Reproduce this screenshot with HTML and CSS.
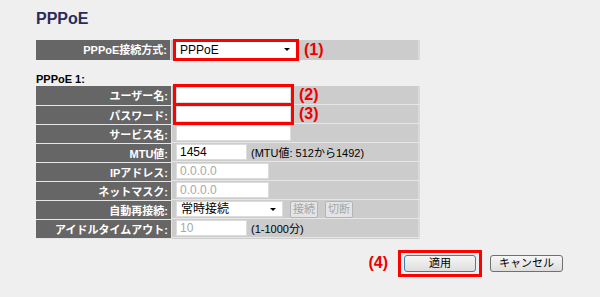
FILE: index.html
```html
<!DOCTYPE html>
<html lang="ja">
<head>
    <meta charset="UTF-8">
    <title>PPPoE</title>
    <link rel="stylesheet" href="styles.css">
</head>
<body>
    <h1 class="title">PPPoE</h1>

    <div class="setting-row">
        <div class="label">PPPoE接続方式:</div>
        <div class="value">
            <span class="select wide marked">PPPoE<i class="arrow"></i></span>
            <span class="note-mark">(1)</span>
        </div>
    </div>

    <div class="section-title">PPPoE 1:</div>

    <table class="settings">
        <tr>
            <td class="label">ユーザー名:</td>
            <td class="value"><span class="field long marked"></span><span class="note-mark">(2)</span></td>
        </tr>
        <tr>
            <td class="label">パスワード:</td>
            <td class="value"><span class="field long marked"></span><span class="note-mark">(3)</span></td>
        </tr>
        <tr>
            <td class="label">サービス名:</td>
            <td class="value"><span class="field long"></span></td>
        </tr>
        <tr>
            <td class="label">MTU値:</td>
            <td class="value"><span class="field short">1454</span><span class="hint">(MTU値: 512から1492)</span></td>
        </tr>
        <tr>
            <td class="label">IPアドレス:</td>
            <td class="value"><span class="field mid disabled">0.0.0.0</span></td>
        </tr>
        <tr>
            <td class="label">ネットマスク:</td>
            <td class="value"><span class="field mid disabled">0.0.0.0</span></td>
        </tr>
        <tr>
            <td class="label">自動再接続:</td>
            <td class="value">
                <span class="select auto">常時接続<i class="arrow"></i></span>
                <span class="btn-small">接続</span>
                <span class="btn-small">切断</span>
            </td>
        </tr>
        <tr>
            <td class="label">アイドルタイムアウト:</td>
            <td class="value"><span class="field short disabled">10</span><span class="hint">(1-1000分)</span></td>
        </tr>
    </table>

    <div class="actions">
        <span class="note-mark">(4)</span>
        <span class="btn-box"><button class="btn focused">適用</button></span>
        <button class="btn">キャンセル</button>
    </div>
</body>
</html>
```

FILE: styles.css
```css
body {
    margin: 0;
    background: #efefef;
    font-family: "Liberation Sans", "Noto Sans CJK JP", sans-serif;
    font-size: 12px;
    color: #000;
}

.title {
    margin: 0 0 12px 36px;
    padding-top: 10px;
    font-size: 16px;
    line-height: 18px;
    color: #2b2b5c;
}

.setting-row {
    display: flex;
    width: 384px;
    height: 20px;
    margin-left: 36px;
    background: #cccccc;
    box-shadow: inset -2px 0 0 #dadada;
}

.label {
    width: 131px;
    padding-right: 3px;
    background: #666666;
    color: #fff;
    font-weight: bold;
    font-size: 11px;
    text-align: right;
    border-right: 1px solid #e4e4e4;
    white-space: nowrap;
}

.setting-row .label {
    line-height: 20px;
}

.value {
    display: flex;
    align-items: center;
    padding-left: 4px;
    white-space: nowrap;
}

.section-title {
    margin: 12px 0 0 36px;
    font-weight: bold;
    font-size: 11px;
    line-height: 14px;
}

.settings {
    width: 384px;
    margin-left: 36px;
    border-collapse: collapse;
    background: #cccccc;
    box-shadow: inset -2px 0 0 #dadada;
}

.settings td {
    height: 18px;
    padding-top: 0;
    padding-bottom: 0;
    border-bottom: 1px solid #e6e6e6;
}

.settings td.value {
    display: flex;
    height: 18px;
}

.field {
    display: inline-block;
    box-sizing: border-box;
    height: 16px;
    padding: 0 3px;
    background: #fff;
    border: 1px solid #dcdcdc;
    line-height: 14px;
}

.field.long { width: 115px; }
.field.mid { width: 93px; }
.field.short { width: 71px; }

.field.disabled {
    color: #a8a8a8;
}

.marked {
    outline: 3px solid #ff0000;
}

.hint {
    margin-left: 4px;
    font-size: 11px;
}

.note-mark {
    margin-left: 8px;
    color: #ee0000;
    font-weight: bold;
    font-size: 16px;
}

.select {
    position: relative;
    display: inline-block;
    box-sizing: border-box;
    height: 16px;
    padding: 0 4px;
    background: #fff;
    line-height: 16px;
}

.select.wide {
    width: 120px;
    margin-left: 1px;
}

.select.auto {
    width: 107px;
    border: 1px solid #dcdcdc;
    line-height: 14px;
}

.arrow {
    position: absolute;
    right: 6px;
    top: 6px;
    border-left: 3px solid transparent;
    border-right: 3px solid transparent;
    border-top: 3px solid #000;
}

.btn-small {
    display: inline-block;
    margin-left: 7px;
    padding: 0 2px;
    height: 15px;
    line-height: 15px;
    font-size: 11px;
    color: #a6a6a6;
    background: #e4e4e4;
    border: 1px solid #b4b4b4;
    border-radius: 2px;
}

.actions {
    display: flex;
    justify-content: flex-end;
    align-items: center;
    gap: 8px;
    margin-top: 11px;
    padding-right: 37px;
}

.actions .note-mark {
    margin: 0 2px 0 0;
}

.btn-box {
    display: inline-block;
    padding: 2px 3px;
    border: 3px solid #ff0000;
}

.btn {
    display: block;
    box-sizing: border-box;
    width: 72px;
    height: 17px;
    padding: 0;
    font-family: "Liberation Sans", "Noto Sans CJK JP", sans-serif;
    font-size: 11px;
    line-height: 14px;
    color: #000;
    background: linear-gradient(#f6f6f6, #dedede);
    border: 1px solid #707070;
    border-radius: 3px;
}

.btn.focused {
    border-color: #3c7fb1;
}

.actions > .btn {
    width: 73px;
}
```
